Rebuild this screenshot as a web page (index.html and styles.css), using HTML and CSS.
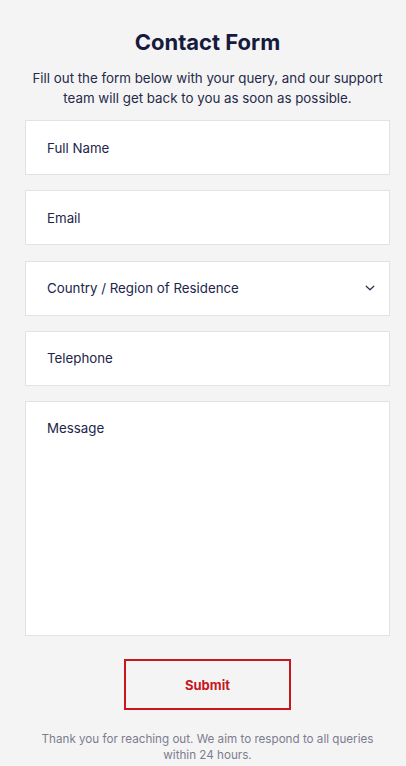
FILE: index.html
```html
<!DOCTYPE html>
<html lang="en">
<head>
<meta charset="utf-8">
<title>Contact Form</title>
<link rel="stylesheet" href="styles.css">
</head>
<body>
<main class="page">
  <h1 class="title">Contact Form</h1>
  <p class="intro">Fill out the form below with your query, and our support team will get back to you as soon as possible.</p>
  <form class="form">
    <div class="field"><span class="label">Full Name</span></div>
    <div class="field"><span class="label">Email</span></div>
    <div class="field field-select">
      <span class="label">Country / Region of Residence</span>
      <svg class="chevron" width="10" height="6" viewBox="0 0 10 6" aria-hidden="true"><path d="M1.2 1.2l3.8 3.6 3.8-3.6" fill="none" stroke="#2a2d4f" stroke-width="1.2" stroke-linecap="round" stroke-linejoin="round"/></svg>
    </div>
    <div class="field"><span class="label">Telephone</span></div>
    <div class="field field-message"><span class="label">Message</span></div>
    <div class="actions"><button type="button" class="submit">Submit</button></div>
  </form>
  <p class="note">Thank you for reaching out. We aim to respond to all queries within 24 hours.</p>
</main>
</body>
</html>
```
FILE: styles.css
```css
* { box-sizing: border-box; }
body {
  margin: 0;
  background: #f4f4f4;
  font-family: Inter, "Noto Sans", sans-serif;
  color: #1d2044;
}
.page {
  padding: 28px 16px 0 25px;
}
.title {
  margin: 0;
  text-align: center;
  font-size: 22px;
  line-height: 28px;
  font-weight: 700;
  color: #161a3d;
}
.intro {
  margin: 12px 0 0;
  text-align: center;
  font-size: 13.33px;
  line-height: 20px;
  color: #262a4a;
}
.form {
  margin-top: 12px;
  display: flex;
  flex-direction: column;
  gap: 15.3px;
}
.field {
  background: #fff;
  border: 1px solid #e1e1e6;
  height: 55px;
  padding: 0 14px 0 21px;
  display: flex;
  align-items: center;
  justify-content: space-between;
}
.label {
  font-size: 13.3px;
  color: #22254a;
}
.field-message {
  height: 234.5px;
  align-items: flex-start;
  padding-top: 18px;
}
.chevron { display: block; }
.actions {
  display: flex;
  justify-content: center;
  padding-top: 8.5px;
}
.submit {
  width: 167px;
  height: 51px;
  background: transparent;
  border: 2px solid #c8161d;
  color: #c8161d;
  font-family: Inter, "Noto Sans", sans-serif;
  font-size: 13px;
  font-weight: 700;
  cursor: pointer;
}
.note {
  margin: 21px 0 0;
  text-align: center;
  font-size: 11.65px;
  line-height: 16px;
  color: #7d7d8f;
  padding: 0 7px;
}
```
